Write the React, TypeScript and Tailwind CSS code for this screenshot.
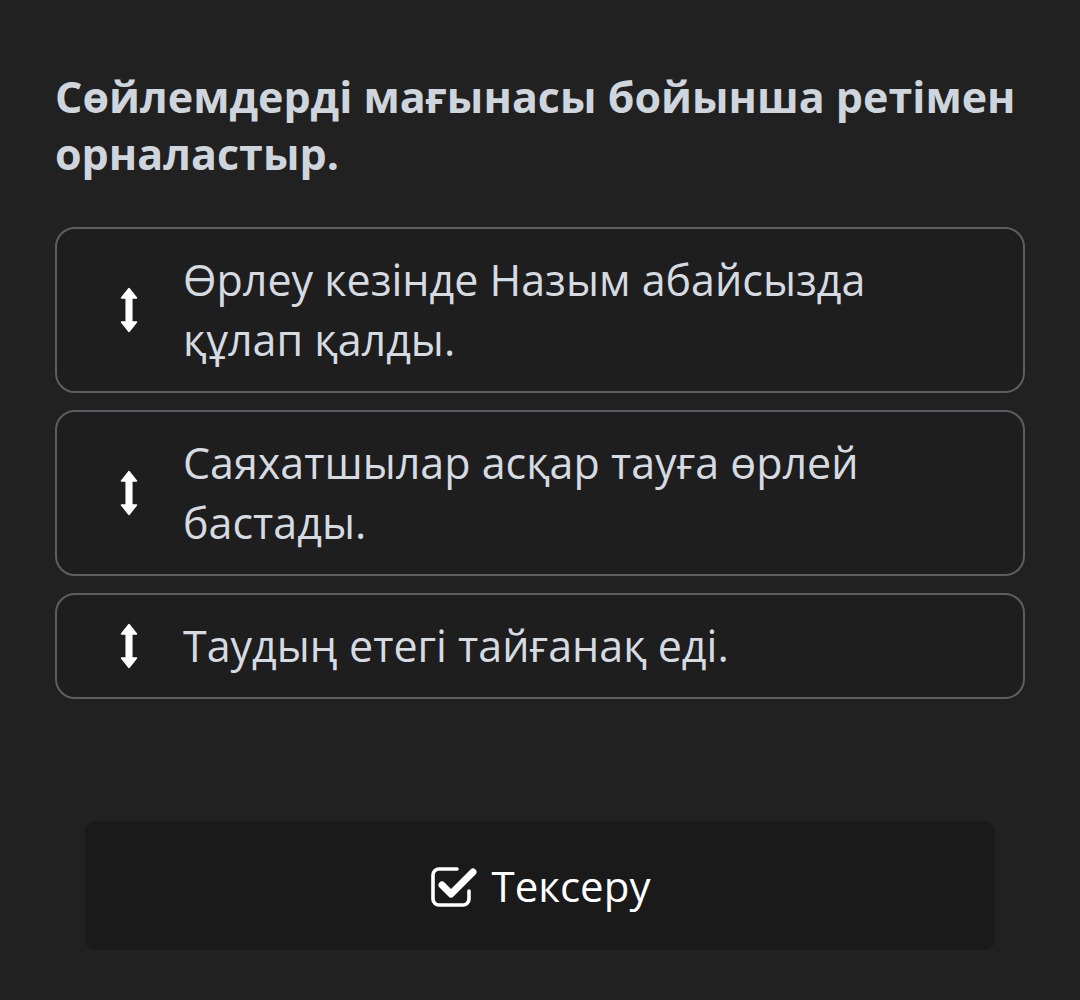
import React from "react";

const items = [
  "Өрлеу кезінде Назым абайсызда құлап қалды.",
  "Саяхатшылар асқар тауға өрлей бастады.",
  "Таудың етегі тайғанақ еді.",
];

function ArrowV() {
  return (
    <svg width="18" height="46" viewBox="0 0 18 46" className="block">
      <polygon
        points="9,1.5 16.5,11 11.8,11 11.8,35 16.5,35 9,44.5 1.5,35 6.2,35 6.2,11 1.5,11"
        fill="#ffffff"
        stroke="#ffffff"
        strokeWidth="1.5"
        strokeLinejoin="round"
      />
    </svg>
  );
}

function CheckSquare() {
  return (
    <svg width="48" height="42" viewBox="0 0 48 42" className="block">
      <path
        d="M27 4 H9 a6 6 0 0 0 -6 6 v24 a6 6 0 0 0 6 6 h24 a6 6 0 0 0 6 -6 v-8"
        fill="none"
        stroke="#ffffff"
        strokeWidth="3.6"
        strokeLinecap="round"
      />
      <path
        d="M12 20 L21 29 L43 7"
        fill="none"
        stroke="#ffffff"
        strokeWidth="7"
        strokeLinecap="round"
        strokeLinejoin="round"
      />
    </svg>
  );
}

export default function App() {
  return (
    <div
      className="w-[1080px] h-[1000px] bg-[#212121] px-[55px] pt-[68px]"
      style={{ fontFamily: '"Open Sans", "Noto Sans", sans-serif' }}
    >
      <h1 className="text-[43px] leading-[57px] font-bold text-[#cfd5dd]">
        Сөйлемдерді мағынасы бойынша ретімен орналастыр.
      </h1>
      <div className="mt-[45px] flex flex-col gap-[17px]">
        {items.map((t) => (
          <div
            key={t}
            className="flex items-center rounded-[20px] border-2 border-[#5b5e63] bg-[#1e1e1e] py-[21px] pr-[100px]"
          >
            <div className="w-[126px] shrink-0 flex justify-end pr-[45px]">
              <ArrowV />
            </div>
            <div className="text-[43px] leading-[60px] text-[#d6dbe1]">{t}</div>
          </div>
        ))}
      </div>
      <div className="mx-[30px] mt-[122px] h-[129px] rounded-[10px] bg-[#1a1a1a] flex items-center justify-center gap-[14px]">
        <CheckSquare />
        <span className="text-[42px] leading-[60px] text-white">Тексеру</span>
      </div>
    </div>
  );
}
